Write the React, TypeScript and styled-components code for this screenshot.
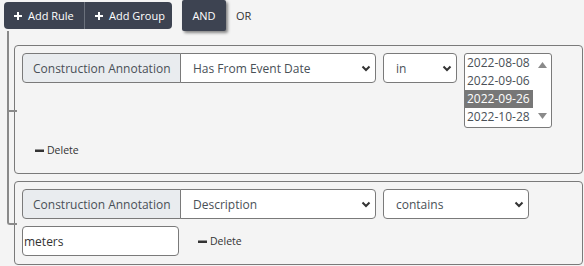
import styled, { createGlobalStyle } from 'styled-components'

const GlobalStyle = createGlobalStyle`
  html, body {
    margin: 0;
    background: #f4f4f4;
  }
  body {
    font-family: "Open Sans", "Liberation Sans", sans-serif;
    color: #333;
  }
  * { box-sizing: border-box; }
`

const Builder = styled.div`
  width: 584px;
  height: 266px;
  overflow: hidden;
`

const Header = styled.div`
  display: flex;
  align-items: center;
  height: 31px;
  padding-left: 4px;
`

const BtnGroup = styled.div`
  display: flex;
  margin-right: 10px;
`

const DarkButton = styled.button<{ $width: number }>`
  display: flex;
  align-items: center;
  gap: 6px;
  width: ${(p) => p.$width}px;
  height: 27px;
  padding: 0 0 0 10px;
  border: 0;
  background: #3d4351;
  color: #fff;
  font-family: inherit;
  font-size: 11px;
  white-space: nowrap;
  &:first-child {
    border-radius: 4px 0 0 4px;
    border-right: 1px solid #6b717c;
  }
  &:last-child {
    border-radius: 0 4px 4px 0;
  }
`

const AndButton = styled.button`
  height: 31px;
  width: 44px;
  border: 0;
  border-radius: 2px;
  background: #3d4351;
  color: #fff;
  font-family: inherit;
  font-size: 11px;
  box-shadow: 2px 2px 3px rgba(0, 0, 0, 0.45);
`

const OrLabel = styled.span`
  margin-left: 10px;
  font-size: 11px;
  color: #333;
`

const RulesList = styled.div`
  padding: 14px 1px 0 14px;
`

const Rule = styled.div`
  position: relative;
  border: 1px solid #7a7a7a;
  border-radius: 4px;
  padding: 7px 7px 8px;

  & + & {
    margin-top: 7px;
  }

  &::before,
  &::after {
    content: '';
    position: absolute;
    left: -8px;
    width: 8px;
    border-left: 2px solid #8a8a8a;
  }
  &::before {
    top: -8px;
    height: calc(50% + 8px);
    border-bottom: 2px solid #8a8a8a;
  }
  &:first-child::before {
    top: -15px;
    height: calc(50% + 15px);
  }
  &::after {
    top: 50%;
    height: calc(50% + 8px);
  }
  &:last-child::after {
    display: none;
  }
  &:last-child::before {
    border-bottom-left-radius: 3px;
  }
`

const Row = styled.div<{ $gap?: number; $center?: boolean }>`
  display: flex;
  align-items: ${(p) => (p.$center ? 'center' : 'flex-start')};
  gap: ${(p) => p.$gap ?? 7}px;
  & + & {
    margin-top: 7px;
  }
`

const FieldGroup = styled.div`
  display: flex;
`

const FieldLabel = styled.div`
  display: flex;
  align-items: center;
  width: 159px;
  height: 30px;
  padding-left: 10px;
  background: #e9ecef;
  border: 1px solid #7a7a7a;
  border-radius: 4px 0 0 4px;
  color: #495057;
  font-size: 12px;
  white-space: nowrap;
`

const SelectBox = styled.div<{ $width: number; $joined?: boolean }>`
  display: flex;
  align-items: center;
  justify-content: space-between;
  width: ${(p) => p.$width}px;
  height: 30px;
  padding: 0 4px 0 12px;
  margin-left: ${(p) => (p.$joined ? -1 : 0)}px;
  background: #fff;
  border: 1px solid #7a7a7a;
  border-radius: ${(p) => (p.$joined ? '0 4px 4px 0' : '4px')};
  color: #495057;
  font-size: 12px;
  white-space: nowrap;
`

const ListBox = styled.div`
  display: flex;
  width: 88px;
  height: 75px;
  background: #fff;
  border: 1px solid #7a7a7a;
  border-radius: 3px;
`

const ListItems = styled.div`
  width: 68px;
`

const ListItem = styled.div<{ $selected?: boolean }>`
  height: 18px;
  line-height: 18px;
  padding-left: 2px;
  font-size: 12px;
  color: ${(p) => (p.$selected ? '#fff' : '#495057')};
  background: ${(p) => (p.$selected ? '#777' : 'transparent')};
`

const ScrollTrack = styled.div`
  flex: 1;
  display: flex;
  flex-direction: column;
  justify-content: space-between;
  align-items: center;
  padding: 8px 0;
`

const TextInput = styled.div`
  display: flex;
  align-items: center;
  width: 157px;
  height: 30px;
  padding-left: 1px;
  background: #fff;
  border: 1px solid #7a7a7a;
  border-radius: 4px;
  color: #333;
  font-size: 12px;
`

const DeleteButton = styled.button`
  display: flex;
  align-items: center;
  gap: 3px;
  height: 20px;
  padding: 0 13px;
  border: 0;
  background: transparent;
  color: #333;
  font-family: inherit;
  font-size: 10.5px;
`

const DeleteRow = styled.div`
  display: flex;
  margin-top: 12px;
  padding-bottom: 5px;
`

const PlusIcon = () => (
  <svg width="8" height="8" viewBox="0 0 8 8">
    <path d="M4 0v8M0 4h8" stroke="#fff" strokeWidth="2" />
  </svg>
)

const MinusIcon = () => (
  <svg width="9" height="3" viewBox="0 0 9 3">
    <rect y="0.5" width="9" height="2.5" fill="#333" />
  </svg>
)

const Chevron = () => (
  <svg width="10" height="7" viewBox="0 0 10 7">
    <path d="M1.5 1.5 5 5l3.5-3.5" fill="none" stroke="#333" strokeWidth="2" />
  </svg>
)

const Arrow = ({ up }: { up?: boolean }) => (
  <svg width="9" height="6" viewBox="0 0 9 6">
    <path d={up ? 'M4.5 0 9 6H0z' : 'M0 0h9L4.5 6z'} fill="#8a8a8a" />
  </svg>
)

const dates = ['2022-08-08', '2022-09-06', '2022-09-26', '2022-10-28']

export default function App() {
  return (
    <Builder>
      <GlobalStyle />
      <Header>
        <BtnGroup>
          <DarkButton $width={81}>
            <PlusIcon />
            Add Rule
          </DarkButton>
          <DarkButton $width={87}>
            <PlusIcon />
            Add Group
          </DarkButton>
        </BtnGroup>
        <AndButton>AND</AndButton>
        <OrLabel>OR</OrLabel>
      </Header>

      <RulesList>
        <Rule>
          <Row>
            <FieldGroup>
              <FieldLabel>Construction Annotation</FieldLabel>
              <SelectBox $width={196} $joined>
                Has From Event Date
                <Chevron />
              </SelectBox>
            </FieldGroup>
            <SelectBox $width={74}>
              in
              <Chevron />
            </SelectBox>
            <ListBox>
              <ListItems>
                {dates.map((d) => (
                  <ListItem key={d} $selected={d === '2022-09-26'}>
                    {d}
                  </ListItem>
                ))}
              </ListItems>
              <ScrollTrack>
                <Arrow up />
                <Arrow />
              </ScrollTrack>
            </ListBox>
          </Row>
          <DeleteRow>
            <DeleteButton>
              <MinusIcon />
              Delete
            </DeleteButton>
          </DeleteRow>
        </Rule>

        <Rule>
          <Row>
            <FieldGroup>
              <FieldLabel>Construction Annotation</FieldLabel>
              <SelectBox $width={196} $joined>
                Description
                <Chevron />
              </SelectBox>
            </FieldGroup>
            <SelectBox $width={146}>
              contains
              <Chevron />
            </SelectBox>
          </Row>
          <Row $gap={6} $center>
            <TextInput>meters</TextInput>
            <DeleteButton>
              <MinusIcon />
              Delete
            </DeleteButton>
          </Row>
        </Rule>
      </RulesList>
    </Builder>
  )
}
